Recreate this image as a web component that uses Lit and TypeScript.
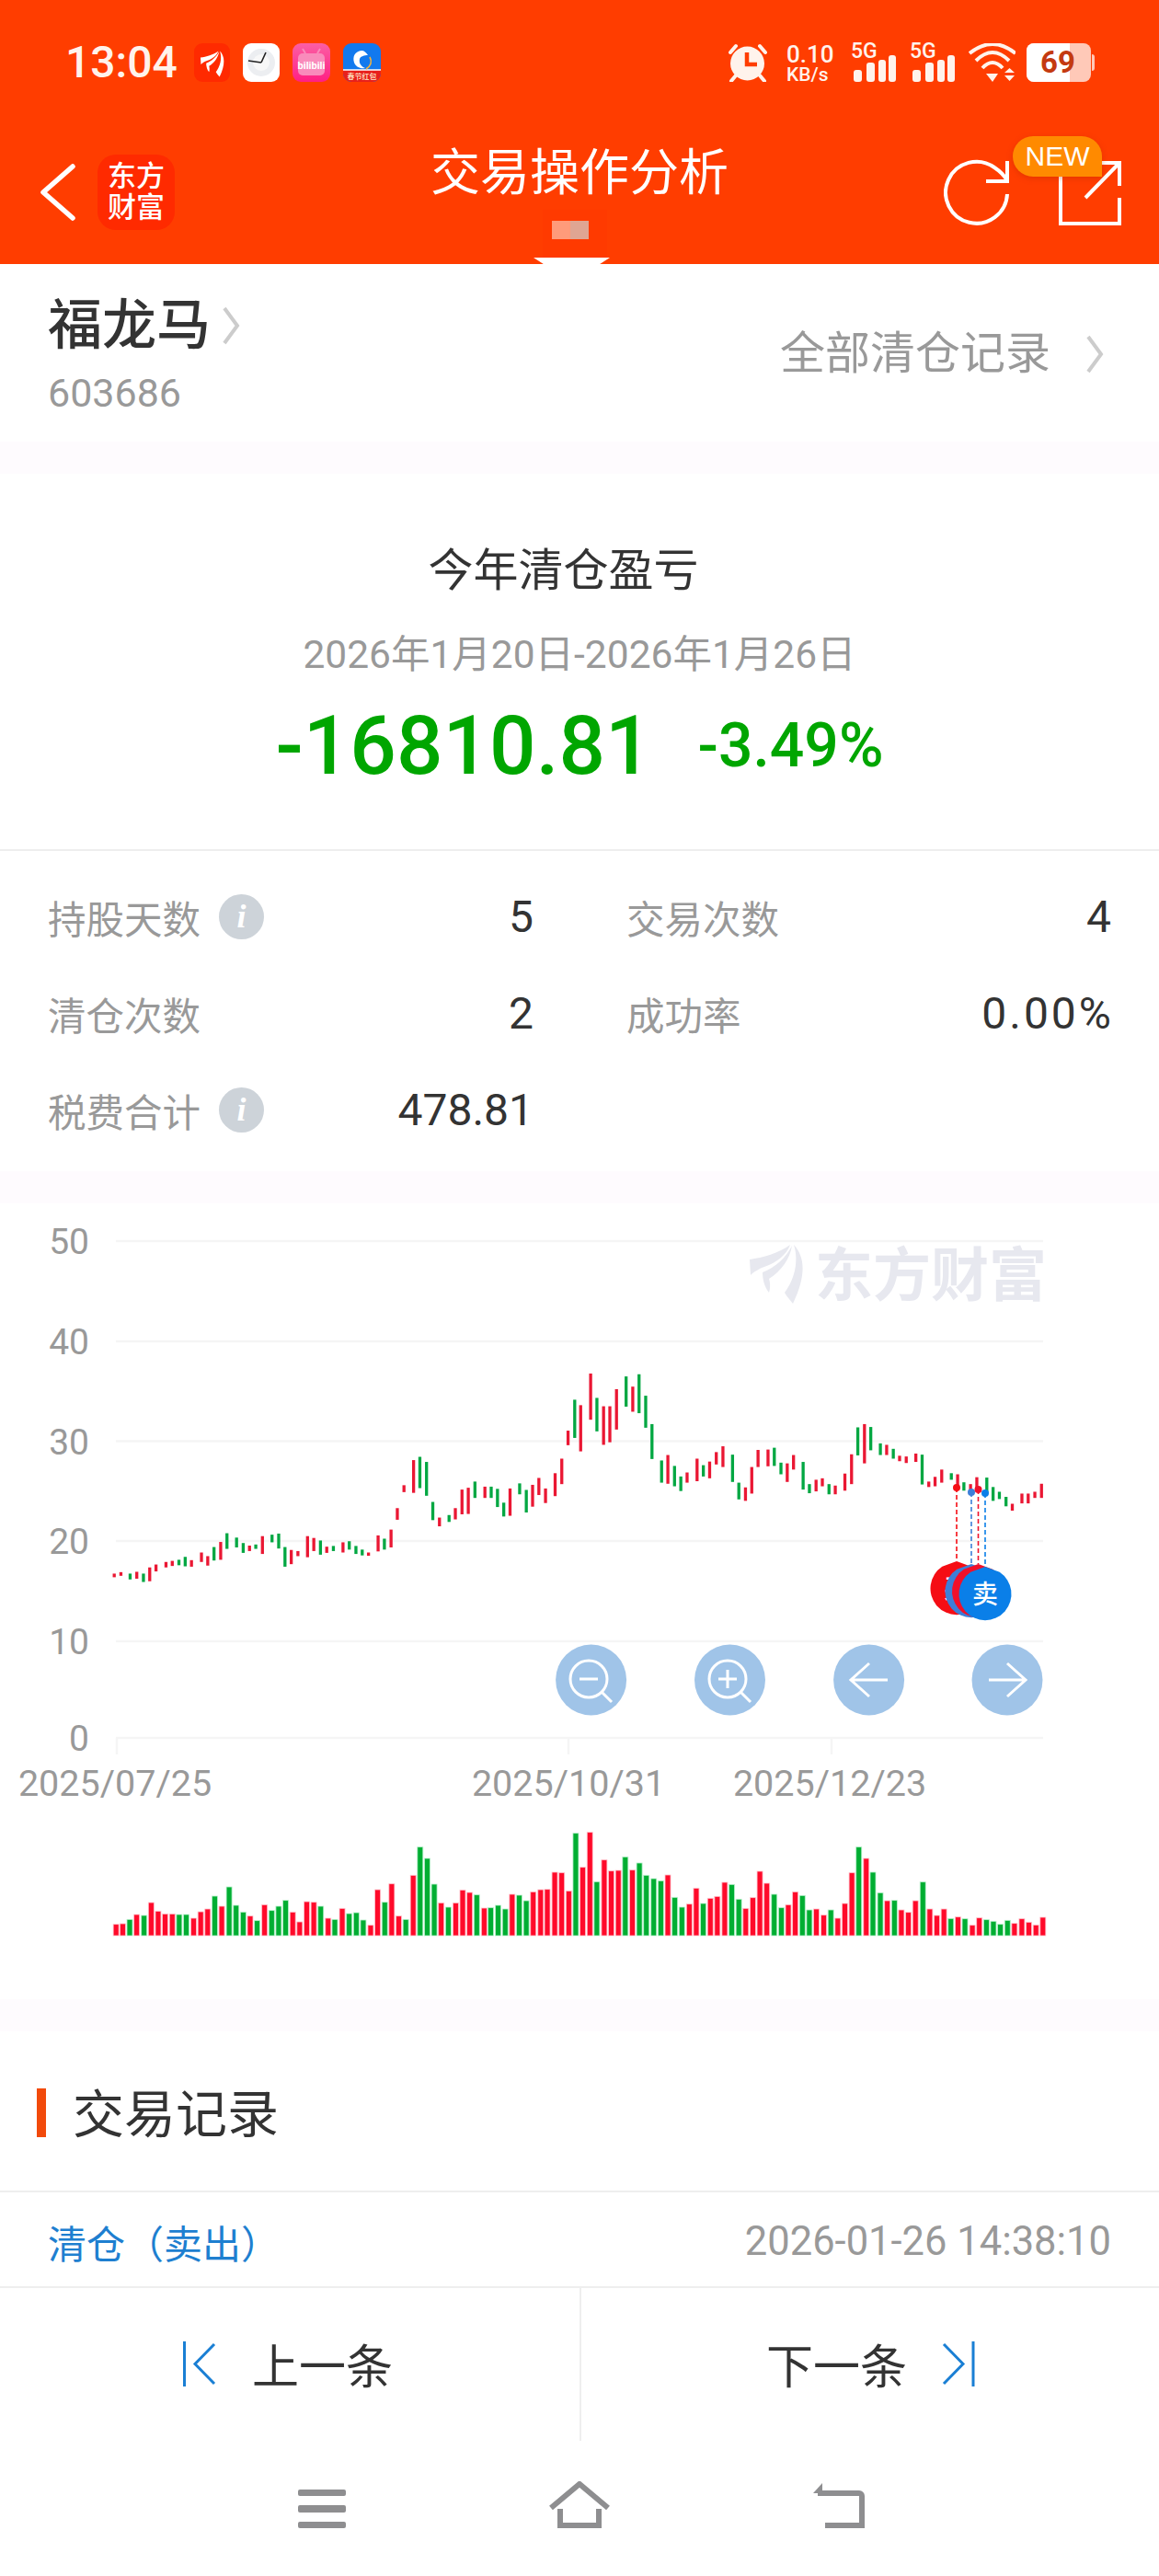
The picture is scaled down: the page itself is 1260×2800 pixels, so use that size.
import { css, html, LitElement, svg, TemplateResult } from "lit";
import { customElement } from "lit/decorators.js";

type Bar = [number, number, string];
type Candle = [number, number, number, string];

// candle positions and ranges in the chart's own pixel grid, read off the crops
const CANDLES_A: Candle[] = [
  [309,1038,1048,"r"],[327,1034,1044,"r"],[352,1038,1054,"g"],[370,1033,1052,"r"],[388,1038,1061,"g"],
  [405,1021,1059,"r"],[422,1013,1032,"r"],[449,1006,1021,"r"],[466,1003,1017,"r"],[484,1000,1015,"g"],
  [501,992,1018,"g"],[518,1001,1019,"r"],[545,980,1006,"r"],[562,990,1016,"r"],[579,965,1002,"g"],
  [597,951,1000,"r"],[614,927,970,"g"],[640,939,966,"g"],[658,954,981,"g"],[675,961,976,"r"],
  [692,958,970,"g"],[710,935,984,"r"],[736,931,952,"g"],[754,928,969,"g"],[771,965,1019,"g"],
  [788,973,1012,"r"],[806,976,990,"r"],[832,935,993,"r"],[849,940,976,"r"],[867,947,986,"g"],
  [884,964,981,"r"],[902,962,976,"g"],[928,952,980,"r"],[945,949,972,"g"],[963,962,984,"g"],
  [980,972,988,"g"],[997,980,989,"r"],[1023,933,977,"r"],[1040,942,972,"g"],[1058,917,966,"r"],
  [1075,858,890,"r"],[1093,795,814,"r"],[1119,726,816,"r"],[1136,717,803,"g"],[1154,731,824,"g"],
  [1171,841,891,"g"],[1189,884,908,"r"],[1215,877,896,"g"],[1232,858,889,"r"],[1250,807,875,"r"],
  [1267,802,874,"r"],[1285,785,830,"g"],[1312,799,830,"r"],[1329,799,830,"g"],[1346,805,855,"g"],
  [1363,843,881,"g"],[1380,804,879,"r"],[1406,790,820,"g"],[1424,808,870,"g"],[1441,794,854,"r"],
  [1458,775,822,"r"],[1476,804,844,"r"],[1502,762,825,"r"],[1520,722,792,"r"],[1537,645,685,"r"],
  [1555,560,665,"g"],
];
const CANDLES_B: Candle[] = [
  [3,575,702,"r"],[30,488,615,"r"],[47,555,647,"g"],[65,578,684,"r"],[82,578,677,"r"],[100,531,642,"r"],
  [126,496,579,"g"],[144,524,593,"r"],[161,490,597,"g"],[179,549,637,"g"],[196,627,723,"g"],[222,727,788,"g"],
  [239,712,791,"r"],[257,742,798,"g"],[274,771,811,"g"],[291,760,788,"r"],[318,722,784,"r"],[335,740,771,"g"],
  [352,730,776,"r"],[370,704,738,"r"],[388,688,745,"r"],[414,711,786,"g"],[431,788,834,"g"],[449,801,838,"r"],
  [466,745,818,"r"],[483,698,745,"r"],[510,697,743,"r"],[527,692,742,"g"],[545,733,765,"g"],[562,735,786,"r"],
  [579,712,752,"r"],[605,731,807,"g"],[622,792,817,"g"],[640,780,812,"r"],[657,776,798,"r"],[675,792,820,"g"],
  [692,796,820,"r"],[718,763,810,"r"],[736,710,792,"r"],[753,636,713,"g"],[771,627,735,"r"],[788,635,699,"g"],
  [814,680,712,"g"],[831,684,712,"r"],[849,695,722,"g"],[866,714,729,"r"],[884,716,734,"r"],[910,708,731,"r"],
  [927,711,793,"g"],[945,785,800,"r"],[962,772,798,"r"],[980,752,788,"r"],[1006,762,780,"g"],[1023,765,800,"r"],
  [1040,787,810,"g"],[1058,792,810,"r"],[1075,773,810,"r"],[1102,774,818,"g"],[1119,800,838,"g"],[1136,813,833,"g"],
  [1154,827,853,"g"],[1171,846,865,"r"],[1197,818,845,"r"],[1214,818,845,"r"],[1232,813,830,"r"],[1250,791,830,"r"],
];
const VOL_A: Bar[] = [
  [314,455,"r"],[332,453,"r"],[351,439,"g"],[370,423,"r"],[390,426,"g"],[409,384,"r"],[428,412,"r"],[447,421,"r"],
  [466,421,"r"],[485,423,"g"],[504,423,"g"],[524,435,"r"],[543,414,"r"],[562,405,"r"],[581,363,"g"],[600,396,"r"],
  [620,333,"g"],[639,393,"g"],[658,415,"g"],[677,428,"r"],[696,443,"g"],[716,391,"r"],[735,410,"g"],[754,396,"g"],
  [773,377,"g"],[792,415,"r"],[811,447,"r"],[830,381,"r"],[849,383,"r"],[868,396,"g"],[888,435,"r"],[906,439,"g"],
  [926,403,"r"],[945,420,"g"],[964,417,"g"],[983,441,"g"],[1003,458,"r"],[1022,342,"r"],[1041,383,"g"],[1060,323,"r"],
  [1079,428,"r"],[1098,439,"g"],[1118,295,"r"],[1137,203,"g"],[1156,240,"g"],[1175,324,"g"],[1194,385,"r"],[1213,399,"g"],
  [1233,385,"r"],[1252,343,"r"],[1271,351,"r"],[1290,359,"g"],[1310,402,"r"],[1328,401,"g"],[1348,393,"g"],[1367,405,"g"],
  [1386,357,"r"],[1405,360,"g"],[1424,378,"g"],[1443,349,"r"],[1463,342,"r"],[1481,341,"r"],[1501,285,"r"],[1520,287,"r"],
  [1539,346,"r"],[1558,158,"g"],
];
const VOL_B: Bar[] = [
  [9,269,"r"],[28,155,"r"],[47,316,"g"],[67,245,"r"],[86,281,"r"],[105,279,"r"],[124,235,"g"],[143,278,"r"],
  [162,255,"g"],[181,295,"g"],[201,306,"g"],[220,313,"g"],[239,294,"r"],[258,367,"g"],[277,399,"g"],[297,389,"r"],
  [316,337,"r"],[335,387,"g"],[354,370,"r"],[373,364,"r"],[393,318,"r"],[412,325,"g"],[431,373,"g"],[450,403,"r"],
  [469,368,"r"],[488,282,"r"],[507,321,"r"],[527,357,"g"],[546,401,"g"],[565,391,"r"],[584,349,"r"],[603,361,"g"],
  [622,408,"g"],[641,405,"r"],[661,425,"r"],[680,408,"g"],[699,435,"r"],[718,387,"r"],[737,287,"r"],[756,203,"g"],
  [776,240,"r"],[794,285,"g"],[814,352,"g"],[833,378,"r"],[852,377,"g"],[871,408,"r"],[890,416,"r"],[909,378,"r"],
  [929,317,"g"],[948,405,"r"],[967,426,"r"],[986,405,"r"],[1005,436,"g"],[1024,431,"r"],[1043,437,"g"],[1063,458,"r"],
  [1082,434,"r"],[1101,440,"g"],[1120,445,"g"],[1139,455,"g"],[1158,442,"g"],[1177,452,"r"],[1197,437,"r"],[1216,448,"r"],
  [1235,457,"r"],[1254,432,"r"],
];

const SX = 2.489;
const SY = 2.529;

const WING = svg`
  <path d="M0 17C14 15 32 10 44 1C40 12 30 20 16 25C10 27 4 31 1 34Z" />
  <path d="M46 2C44 16 34 30 21 38C23 44 22 50 21 53C16 47 14 38 14 31C28 26 40 14 46 2Z" />
  <path d="M48 1C60 14 62 34 47 65C44 61 40 57 38 53C48 40 54 20 48 1Z" />
`;

@customElement("app-root")
export class AppRoot extends LitElement {
  private signal(): TemplateResult {
    return html`<div class="sig">
      <span class="sig-text">5G</span>
      <svg width="50" height="42" viewBox="0 0 50 42">
        <rect x="3" y="29" width="9" height="13" rx="3" />
        <rect x="17" y="21" width="9" height="21" rx="3" />
        <rect x="30" y="18" width="8" height="24" rx="3" />
        <rect x="41" y="13" width="8" height="29" rx="3" />
      </svg>
    </div>`;
  }

  private statusBar(): TemplateResult {
    return html`
      <div class="status">
        <div class="status-left">
          <span class="time">13:04</span>
          <svg class="app" width="39" height="42" viewBox="0 0 39 42">
            <rect width="39" height="42" rx="9" fill="#ff2a00" />
            <g fill="#fff" transform="translate(7 8) scale(.44)">${WING}</g>
          </svg>
          <svg class="app" width="40" height="42" viewBox="0 0 40 42">
            <rect width="40" height="42" rx="9" fill="#fff" />
            <circle cx="20" cy="21" r="15" fill="#eceef1" />
            <circle cx="20" cy="21" r="9" fill="#f8f8f8" />
            <path d="M25 10L20 21M6 19L20 21" stroke="#222" stroke-width="1.6" fill="none" />
          </svg>
          <svg class="app" width="41" height="42" viewBox="0 0 41 42">
            <defs>
              <linearGradient id="bili" x1="0" y1="0" x2="0" y2="1">
                <stop offset="0" stop-color="#fb5fa4" />
                <stop offset="1" stop-color="#ff1f83" />
              </linearGradient>
            </defs>
            <rect width="41" height="42" rx="9" fill="url(#bili)" />
            <rect x="6" y="11" width="29" height="24" rx="5" fill="#f98bbb" />
            <path d="M14 11L11 6M27 11L30 6" stroke="#f98bbb" stroke-width="2" />
            <text x="20.5" y="28" class="bili">bilibili</text>
          </svg>
          <svg class="app" width="41" height="42" viewBox="0 0 41 42">
            <rect width="41" height="42" rx="9" fill="#1279ee" />
            <path d="M0 29H41V33a9 9 0 0 1-9 9H9a9 9 0 0 1-9-9Z" fill="#e8201c" />
            <path d="M0 29H41" stroke="#fff" stroke-width="1.4" />
            <path
              d="M20 8C13 9 10 14 12 21C14 26 19 28 24 27C19 25 17 21 18 17C19 14 23 13 27 13C25 10 23 8 20 8Z"
              fill="#fff"
            />
            <path d="M29 15C32 20 30 25 25 28" stroke="#f6b23c" stroke-width="1.6" fill="none" />
            <text x="20.5" y="39" class="cny">春节红包</text>
          </svg>
        </div>
        <div class="status-right">
          <svg class="alarm" width="44" height="42" viewBox="0 0 44 42">
            <path d="M3 10L9 3M35 3L41 10M9 35L4 41M35 35L40 41" class="alarm-line" />
            <circle cx="21.5" cy="22" r="18.5" class="alarm-face" />
            <path d="M21 10V23H32" class="alarm-hand" />
          </svg>
          <div class="net"><span class="net-a">0.10</span><span class="net-b">KB/s</span></div>
          <div class="sigs">${this.signal()}${this.signal()}</div>
          <svg class="wifi" width="51" height="42" viewBox="0 0 51 42">
            <path d="M1 11Q26 -9 51 11M8 19Q26 1 44 19M15 27Q26 15 37 27" class="wifi-arc" />
            <path d="M19 33H32L26 42ZM39 32H50L44.5 27ZM39 35H50L44.5 41Z" class="wifi-fill" />
          </svg>
          <svg class="batt" width="74" height="42" viewBox="0 0 74 42">
            <rect x="0" y="0" width="70" height="42" rx="8" fill="#fff" fill-opacity=".72" />
            <path d="M8 0H47V42H8a8 8 0 0 1-8-8V8a8 8 0 0 1 8-8Z" fill="#fff" />
            <path d="M71 12a3 3 0 0 1 3 3V27a3 3 0 0 1-3 3Z" fill="#fff" fill-opacity=".72" />
            <text x="34" y="32" class="batt-text">69</text>
          </svg>
        </div>
      </div>
    `;
  }

  private navBar(): TemplateResult {
    return html`
      <div class="nav">
        <div class="nav-left">
          <svg width="38" height="62" viewBox="0 0 38 62">
            <path d="M35 3L3 31L35 59" class="chev" />
          </svg>
          <div class="logo"><span>东方</span><span>财富</span></div>
        </div>
        <div class="nav-title">交易操作分析</div>
        <div class="nav-right">
          <svg width="71" height="72" viewBox="0 0 71 72">
            <path d="M69 38A33.5 33.5 0 1 1 55 9Q64 15 69 23M69 2V24H46" class="stroke" />
          </svg>
          <svg width="68" height="72" viewBox="0 0 68 72">
            <path d="M2 19V70H66V42M29 42L66 4M43 4H66V29" class="stroke" />
          </svg>
          <span class="badge">NEW</span>
        </div>
        <div class="mosaic"><i class="m1"></i><i class="m2"></i></div>
        <div class="notch"></div>
      </div>
    `;
  }

  private info(): TemplateResult {
    return html`<span class="info">i</span>`;
  }

  private chart(): TemplateResult {
    const grid = [1349, 1458, 1566.5, 1675, 1784, 1889];
    const labels = ["50", "40", "30", "20", "10", "0"];
    const candles = [
      ...CANDLES_A.map(([x, t, b, c]) => [x / SX, t, b, c] as const),
      ...CANDLES_B.map(([x, t, b, c]) => [630 + x / SX, t, b, c] as const),
    ];
    const vols = [
      ...VOL_A.map(([x, t, c]) => [x / SX, t, c] as const),
      ...VOL_B.map(([x, t, c]) => [630 + x / SX, t, c] as const),
    ];
    // only the first and last pins show a readable word, the rest sit underneath
    const pins: [number, number, string, string][] = [
      [1040, 1617, "#f50d14", "买"],
      [1056, 1622, "#3d7fd8", ""],
      [1063.5, 1619, "#f0102a", ""],
      [1071, 1623, "#0a7fe8", "卖"],
    ];
    const apex = [1697, 1700, 1700, 1703];
    const btns = [642.6, 793.5, 944.6, 1095];
    return html`<svg class="chart" width="1260" height="865" viewBox="0 1308 1260 865">
      <g class="wm">
        <g transform="translate(815 1352)">${WING}</g>
        <text x="886" y="1408" class="wm-text">东方财富</text>
      </g>
      ${grid.map((y) => svg`<line x1="126" x2="1134" y1=${y} y2=${y} class="grid" />`)}
      ${[127, 618, 904].map((x) => svg`<line x1=${x} x2=${x} y1="1889" y2="1907" class="grid" />`)}
      ${grid.map(
        (y, i) => svg`<text x="97" y=${y + 14} class="ylab">${labels[i]}</text>`,
      )}
      <text x="125" y="1952" class="xlab">2025/07/25</text>
      <text x="618" y="1952" class="xlab">2025/10/31</text>
      <text x="902" y="1952" class="xlab">2025/12/23</text>
      ${candles.map(
        ([x, t, b, c]) => svg`<rect
          x=${x - 1.6}
          y=${1300 + t / SY}
          width="3.3"
          height=${(b - t) / SY}
          class=${c === "r" ? "c-red" : "c-green"}
        />`,
      )}
      ${vols.map(
        ([x, t, c]) => svg`<rect
          x=${x - 3}
          y=${1940 + t / 3}
          width="6"
          height=${2104 - (1940 + t / 3)}
          class=${c === "r" ? "v-red" : "v-green"}
        />`,
      )}
      ${pins.map(
        ([x, y, col], i) => svg`<line
          x1=${x}
          x2=${x}
          y1=${y}
          y2=${apex[i]}
          stroke=${col}
          stroke-width="1.6"
          stroke-dasharray="5 3"
        />
        <circle cx=${x} cy=${y} r="4" fill=${col} />`,
      )}
      ${pins.map(([x, , col, word], i) => {
        const top = apex[i];
        const r = 28.5;
        const cy = top + 1 + r;
        return svg`<path
            d="M${x} ${top}L${x + r * 0.55} ${cy - r * 0.83}A${r} ${r} 0 1 1 ${x - r * 0.55} ${cy - r * 0.83}Z"
            fill=${col}
          />
          ${word ? svg`<text x=${x} y=${cy + 10} class="pin-text">${word}</text>` : ""}`;
      })}
      ${btns.map(
        (x) => svg`<circle cx=${x} cy="1826" r="38.5" class="btn" />`,
      )}
      <g class="btn-line">
        <circle cx="640" cy="1825" r="20" />
        <path d="M630 1825H650M654 1839L665 1850" />
        <circle cx="791" cy="1825" r="20" />
        <path d="M781 1825H801M791 1815V1835M805 1839L816 1850" />
        <path d="M925 1826H965M945 1808L925 1826L945 1844" />
        <path d="M1075 1826H1115M1095 1808L1115 1826L1095 1844" />
      </g>
    </svg>`;
  }

  protected render(): TemplateResult {
    return html`
      <header class="top">${this.statusBar()}${this.navBar()}</header>

      <section class="stock">
        <div class="stock-left">
          <div class="stock-name">
            <span>福龙马</span>
            <svg width="20" height="42" viewBox="0 0 20 42">
              <path d="M3 2L17 21L3 40" class="chev-grey" />
            </svg>
          </div>
          <div class="stock-code">603686</div>
        </div>
        <div class="stock-link">
          <span>全部清仓记录</span>
          <svg width="20" height="42" viewBox="0 0 20 42">
            <path d="M3 2L17 21L3 40" class="chev-grey" />
          </svg>
        </div>
      </section>
      <div class="band"></div>

      <section class="summary">
        <div class="sum-title">今年清仓盈亏</div>
        <div class="sum-date">2026年1月20日-2026年1月26日</div>
        <div class="sum-nums">
          <span class="sum-big">-16810.81</span>
          <span class="sum-pct">-3.49%</span>
        </div>
      </section>

      <section class="stats">
        <div class="cell">
          <span class="lab">持股天数</span>${this.info()}<span class="val">5</span>
        </div>
        <div class="cell"><span class="lab">交易次数</span><span class="val">4</span></div>
        <div class="cell"><span class="lab">清仓次数</span><span class="val">2</span></div>
        <div class="cell"><span class="lab">成功率</span><span class="val wide">0.00%</span></div>
        <div class="cell">
          <span class="lab">税费合计</span>${this.info()}<span class="val">478.81</span>
        </div>
      </section>
      <div class="band"></div>

      ${this.chart()}
      <div class="band"></div>

      <section class="rec-head"><i class="rec-bar"></i><span class="rec-title">交易记录</span></section>
      <section class="rec-row">
        <span class="rec-type">清仓（卖出）</span>
        <span class="rec-time">2026-01-26 14:38:10</span>
      </section>

      <footer class="pager">
        <div class="pager-btn prev">
          <svg width="36" height="49" viewBox="0 0 36 49">
            <path d="M1.5 0V49M34 3L13 24.5L34 46" class="pager-ico" />
          </svg>
          <span>上一条</span>
        </div>
        <div class="pager-btn next">
          <span>下一条</span>
          <svg width="36" height="49" viewBox="0 0 36 49">
            <path d="M34 0V49M2 3L23 24.5L2 46" class="pager-ico" />
          </svg>
        </div>
      </footer>

      <nav class="sys">
        <svg width="52" height="52" viewBox="0 0 52 52">
          <rect y="9" width="52" height="7" rx="2" />
          <rect y="26" width="52" height="8" rx="2" />
          <rect y="44" width="52" height="7" rx="2" />
        </svg>
        <svg width="68" height="52" viewBox="0 0 68 52">
          <path d="M3 29L34 3L65 29M13 30V48H55V30" class="sys-line" />
        </svg>
        <svg width="56" height="52" viewBox="0 0 56 52">
          <path d="M0 13L10 2V13Z" />
          <path d="M5 13H50a3 3 0 0 1 3 3V48H13" class="sys-line" />
        </svg>
      </nav>
    `;
  }

  static styles = css`
    :host {
      display: block;
      width: 1260px;
      height: 2800px;
      overflow: hidden;
      background: #fff;
      color: #333;
      font-family: Roboto, "Noto Sans CJK SC", sans-serif;
    }
    svg {
      display: block;
      flex: none;
    }

    /* header */
    .top {
      height: 287px;
      background: #ff3d00;
      color: #fff;
    }
    .status {
      height: 120px;
      box-sizing: border-box;
      padding: 47px 70px 0 71px;
      display: flex;
      justify-content: space-between;
      align-items: flex-start;
      color: #fff3ec;
    }
    .status-left {
      display: flex;
      align-items: center;
      gap: 14px;
      height: 42px;
    }
    .time {
      font-size: 48px;
      font-weight: 500;
      line-height: 42px;
      width: 126px;
    }
    .bili {
      font: 700 11px Roboto, sans-serif;
      fill: #fff;
      text-anchor: middle;
    }
    .cny {
      font: 500 8px "Noto Sans CJK SC", sans-serif;
      fill: #ffe9c8;
      text-anchor: middle;
    }
    .status-right {
      display: flex;
      align-items: flex-start;
      height: 42px;
    }
    .alarm {
      margin-right: 20px;
    }
    .alarm-line {
      stroke: #fff3ec;
      stroke-width: 4;
      fill: none;
      stroke-linecap: round;
    }
    .alarm-face {
      fill: #fff3ec;
    }
    .alarm-hand {
      stroke: #ff3d00;
      stroke-width: 4.5;
      fill: none;
    }
    .net {
      width: 50px;
      margin-right: 20px;
      display: flex;
      flex-direction: column;
      font-weight: 500;
    }
    .net-a {
      font-size: 26px;
      line-height: 24px;
    }
    .net-b {
      font-size: 21px;
      line-height: 20px;
      white-space: nowrap;
    }
    .sigs {
      display: flex;
      gap: 14px;
      margin-right: 14px;
    }
    .sig {
      display: grid;
      fill: #fff3ec;
    }
    .sig > * {
      grid-area: 1 / 1;
    }
    .sig-text {
      font-size: 23px;
      font-weight: 500;
      line-height: 18px;
    }
    .wifi {
      margin-right: 12px;
    }
    .wifi-arc {
      fill: none;
      stroke: #fff3ec;
      stroke-width: 4;
    }
    .wifi-fill {
      fill: #fff3ec;
    }
    .batt-text {
      font: 700 33px Roboto, sans-serif;
      fill: #c43a10;
      text-anchor: middle;
    }

    .nav {
      position: relative;
      height: 167px;
      display: grid;
      grid-template-columns: 1fr auto 1fr;
      align-items: start;
    }
    .nav-left {
      display: flex;
      align-items: center;
      gap: 24px;
      padding: 48px 0 0 44px;
    }
    .chev {
      fill: none;
      stroke: #fff;
      stroke-width: 5.5;
      stroke-linecap: round;
      stroke-linejoin: round;
    }
    .logo {
      width: 84px;
      height: 82px;
      border-radius: 20px;
      background: #ff2a00;
      display: flex;
      flex-direction: column;
      align-items: center;
      justify-content: center;
      font-size: 31px;
      font-weight: 500;
      line-height: 34px;
    }
    .nav-title {
      font-size: 54px;
      line-height: 53px;
      margin-top: 42px;
    }
    .nav-right {
      position: relative;
      justify-self: end;
      display: flex;
      gap: 54px;
      margin: 53px 41px 0 0;
    }
    .stroke {
      fill: none;
      stroke: #fff;
      stroke-width: 4;
    }
    .badge {
      position: absolute;
      left: 75px;
      top: -25px;
      width: 97px;
      height: 44px;
      border-radius: 24px 24px 0 24px;
      background: #ff8a00;
      font: 30px/44px "Liberation Sans", sans-serif;
      text-align: center;
      box-shadow: 0 2px 6px rgba(180, 40, 0, 0.35);
    }
    .mosaic {
      position: absolute;
      left: 590px;
      top: 108px;
      width: 70px;
      height: 52px;
      background: #ff3a00;
    }
    .mosaic i {
      position: absolute;
      top: 12px;
      width: 20px;
      height: 20px;
    }
    .m1 {
      left: 10px;
      background: #ff9b7a;
    }
    .m2 {
      left: 30px;
      background: #dfa593;
    }
    .notch {
      position: absolute;
      left: 580px;
      top: 160px;
      width: 83px;
      height: 7px;
      background: #fff;
      clip-path: polygon(0 0, 100% 0, 87% 100%, 13% 100%);
    }

    /* stock */
    .stock {
      height: 193px;
      box-sizing: border-box;
      padding: 34px 60px 0 52px;
      display: flex;
      justify-content: space-between;
      align-items: flex-start;
    }
    .stock-name {
      display: flex;
      align-items: center;
      gap: 12px;
      font-size: 59px;
      font-weight: 500;
      line-height: 66px;
    }
    .stock-code {
      font-size: 43px;
      line-height: 50px;
      color: #999;
      margin-top: 15px;
    }
    .stock-link {
      display: flex;
      align-items: center;
      gap: 38px;
      font-size: 49px;
      line-height: 60px;
      color: #999;
      margin-top: 34px;
    }
    .chev-grey {
      fill: none;
      stroke: #ccc;
      stroke-width: 4;
    }
    .band {
      height: 35px;
      background: #fefbfe;
    }

    /* summary */
    .summary {
      height: 408px;
      box-sizing: border-box;
      padding-top: 77px;
      text-align: center;
    }
    .sum-title {
      font-size: 49px;
      line-height: 58px;
      margin-left: -35px;
    }
    .sum-date {
      font-size: 42.5px;
      line-height: 56px;
      margin-top: 34px;
      color: #999;
    }
    .sum-nums {
      display: flex;
      justify-content: center;
      align-items: center;
      gap: 50px;
      color: #00a600;
      margin-top: 21px;
      line-height: 100px;
    }
    .sum-big {
      font-size: 89px;
      font-weight: 500;
    }
    .sum-pct {
      font-size: 66px;
      font-weight: 500;
    }

    /* stats */
    .stats {
      height: 350px;
      box-sizing: border-box;
      border-top: 2px solid #eee;
      padding: 19px 52px 0;
      display: grid;
      grid-template-columns: 528px 527px;
      column-gap: 101px;
      grid-auto-rows: 105px;
      align-items: center;
    }
    .cell {
      display: flex;
      align-items: center;
      gap: 20px;
    }
    .lab {
      font-size: 41.5px;
      color: #999;
    }
    .val {
      font-size: 48px;
      margin-left: auto;
    }
    .wide {
      letter-spacing: 3px;
      margin-right: -3px;
    }
    .info {
      width: 49px;
      height: 49px;
      border-radius: 50%;
      background: #cdd3d9;
      color: #fff;
      font: italic 700 36px/49px "Liberation Serif", serif;
      text-align: center;
    }

    /* chart */
    .chart {
      width: 1260px;
      height: 865px;
    }
    .grid {
      stroke: #f5f5f5;
      stroke-width: 2.5;
    }
    .ylab {
      font: 39px Roboto, sans-serif;
      fill: #999;
      text-anchor: end;
    }
    .xlab {
      font: 39.5px Roboto, sans-serif;
      fill: #999;
      text-anchor: middle;
    }
    .wm {
      fill: #e7e8ef;
    }
    .wm-text {
      font: 700 63px "Noto Sans CJK SC", sans-serif;
    }
    .c-red {
      fill: #ea1733;
    }
    .c-green {
      fill: #02a742;
    }
    .v-red {
      fill: #ff0a2a;
      stroke: #ffc2cc;
      stroke-width: 0.8;
    }
    .v-green {
      fill: #00ae32;
      stroke: #b8f0cc;
      stroke-width: 0.8;
    }
    .pin-text {
      font: 500 28px "Noto Sans CJK SC", sans-serif;
      fill: #fff;
      text-anchor: middle;
    }
    .btn {
      fill: #a0c4e8;
    }
    .btn-line circle,
    .btn-line path {
      fill: none;
      stroke: #fff;
      stroke-width: 3;
    }

    /* records */
    .rec-head {
      height: 175px;
      box-sizing: border-box;
      padding: 62px 0 0 40px;
      display: flex;
      align-items: flex-start;
      gap: 29px;
      border-bottom: 2px solid #eee;
    }
    .rec-title {
      font-size: 56px;
      line-height: 53px;
      padding-top: 3px;
    }
    .rec-bar {
      width: 10px;
      height: 53px;
      background: #f24a0b;
    }
    .rec-row {
      height: 104px;
      box-sizing: border-box;
      padding: 5px 52px 0;
      display: flex;
      justify-content: space-between;
      align-items: center;
      border-bottom: 2px solid #eee;
    }
    .rec-type {
      font-size: 42px;
      color: #1e7fd0;
    }
    .rec-time {
      font-size: 43.5px;
      color: #999;
    }
    .pager {
      height: 166px;
      display: grid;
      grid-template-columns: 1fr 1fr;
    }
    .pager-btn {
      display: flex;
      align-items: center;
      justify-content: center;
      font-size: 51px;
      padding-bottom: 2px;
    }
    .prev {
      gap: 39px;
      padding-right: 4px;
    }
    .next {
      gap: 38px;
      padding-left: 1px;
      border-left: 2px solid #eee;
    }
    .pager-ico {
      fill: none;
      stroke: #1a7fd4;
      stroke-width: 3;
    }
    .sys {
      height: 147px;
      box-sizing: border-box;
      padding: 44px 0 0 3px;
      display: flex;
      justify-content: center;
      align-items: flex-start;
      gap: 220px;
      fill: #8e8e90;
    }
    .sys-line {
      fill: none;
      stroke: #8e8e90;
      stroke-width: 6;
    }
  `;
}
